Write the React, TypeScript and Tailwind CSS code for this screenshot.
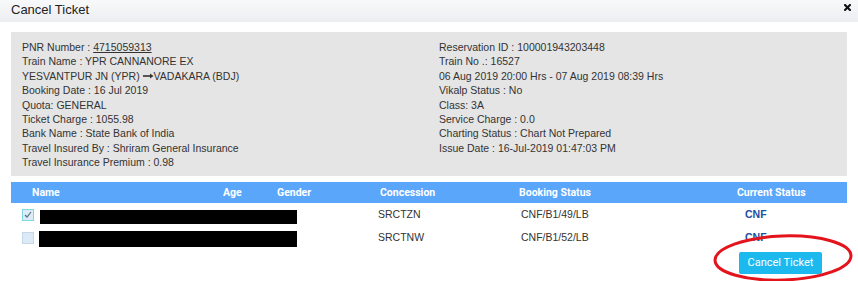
import React from "react";

const left = [
  <>PNR Number : <span className="underline">4715059313</span></>,
  "Train Name : YPR CANNANORE EX",
  <>YESVANTPUR JN (YPR) <span className="inline-block align-middle mt-[-2px]"><svg width="11" height="6" viewBox="0 0 11 6"><path d="M0 3 H8" stroke="#333" strokeWidth="1.6" /><path d="M7 0.5 L10.5 3 L7 5.5 Z" fill="#333" /></svg></span>VADAKARA (BDJ)</>,
  "Booking Date : 16 Jul 2019",
  "Quota: GENERAL",
  "Ticket Charge : 1055.98",
  "Bank Name : State Bank of India",
  "Travel Insured By : Shriram General Insurance",
  "Travel Insurance Premium : 0.98",
];
const right = [
  "Reservation ID : 100001943203448",
  "Train No .: 16527",
  "06 Aug 2019 20:00 Hrs - 07 Aug 2019 08:39 Hrs",
  "Vikalp Status : No",
  "Class: 3A",
  "Service Charge : 0.0",
  "Charting Status : Chart Not Prepared",
  "Issue Date : 16-Jul-2019 01:47:03 PM",
];

function Checkbox({ checked }: { checked: boolean }) {
  return (
    <div
      className={
        "w-[12px] h-[12px] border flex items-center justify-center " +
        (checked ? "border-[#7fd8e4] bg-[#dcecf6]" : "border-[#c5d8ea] bg-[#dde9f5]")
      }
    >
      {checked && (
        <svg width="8" height="7" viewBox="0 0 8 7">
          <path d="M1 4 L3 6 L7 1" fill="none" stroke="#5a6f88" strokeWidth="1.2" />
        </svg>
      )}
    </div>
  );
}

export default function App() {
  return (
    <div
      className="w-[858px] h-[281px] bg-white relative overflow-hidden text-[#333]"
      style={{ fontFamily: '"Liberation Sans", Arial, sans-serif' }}
    >
      <div className="h-[22px] bg-gradient-to-b from-[#f8f9fa] to-[#eceef1] flex items-center justify-between pl-[11px] pr-[7px]">
        <span className="text-[13px] text-[#222] leading-none mt-[-3px]">Cancel Ticket</span>
        <svg width="7" height="7" viewBox="0 0 10 10" className="mt-[-7px]">
          <path d="M1.5 1.5 L8.5 8.5 M8.5 1.5 L1.5 8.5" stroke="#111" strokeWidth="3" strokeLinecap="square" />
        </svg>
      </div>

      <div className="mx-[11px] mt-[10px] h-[144px] bg-[#e5e5e5] flex pl-[11px] pt-[8px] text-[10.5px] leading-[14.4px]">
        <div className="w-[417px] flex flex-col">
          {left.map((t, i) => (
            <div key={i}>{t}</div>
          ))}
        </div>
        <div className="flex flex-col">
          {right.map((t, i) => (
            <div key={i}>{t}</div>
          ))}
        </div>
      </div>

      <div className="mx-[11px] mt-[6px] h-[21px] bg-[#5aa6fb] flex items-center text-white font-bold text-[10.5px]" style={{ fontFamily: 'Roboto, "Liberation Sans", sans-serif' }}>
        <span className="w-[212px] pl-[21px]">Name</span>
        <span className="w-[54px]">Age</span>
        <span className="w-[103px]">Gender</span>
        <span className="w-[139px]">Concession</span>
        <span className="w-[218px]">Booking Status</span>
        <span>Current Status</span>
      </div>

      <div className="mx-[11px] text-[10.5px]">
        <div className="h-[23px] flex items-center">
          <div className="w-[29px] pl-[11px]"><Checkbox checked /></div>
          <div className="w-[257px] h-[14px] bg-black mt-[4px]"></div>
          <div className="w-[81px]"></div>
          <div className="w-[143px]">SRCTZN</div>
          <div className="w-[224px]">CNF/B1/49/LB</div>
          <div className="font-bold text-[#1d4f9c]">CNF</div>
        </div>
        <div className="h-[23px] flex items-center">
          <div className="w-[28px] pl-[11px]"><Checkbox checked={false} /></div>
          <div className="w-[258px] h-[16px] bg-black mt-[2px]"></div>
          <div className="w-[81px]"></div>
          <div className="w-[143px]">SRCTNW</div>
          <div className="w-[224px]">CNF/B1/52/LB</div>
          <div className="font-bold text-[#1d4f9c]">CNF</div>
        </div>
        <div className="flex justify-end pr-[25px] mt-[3px]">
          <button
            className="w-[83px] h-[22px] bg-[#1cb9ef] text-white text-[11px] rounded-[2px]"
            style={{ fontFamily: 'Roboto, "Liberation Sans", sans-serif' }}
          >
            Cancel Ticket
          </button>
        </div>
      </div>

      <svg className="absolute left-[711px] top-[233px]" width="144" height="52" viewBox="0 0 144 52">
        <ellipse cx="72" cy="25" rx="68" ry="22" fill="none" stroke="#e3141c" strokeWidth="3" transform="rotate(-2 72 25)" />
      </svg>
    </div>
  );
}
